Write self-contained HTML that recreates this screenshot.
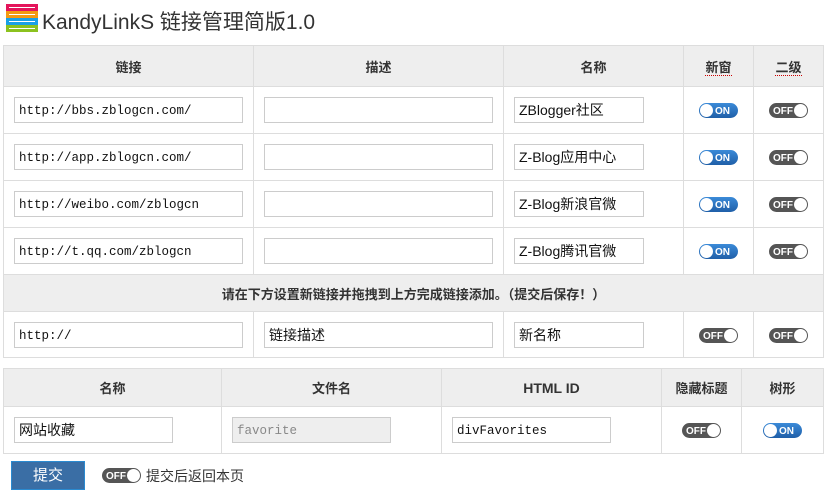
<!DOCTYPE html>
<html><head><meta charset="utf-8"><style>
*{box-sizing:border-box}
body{margin:0;width:826px;height:493px;background:#fff;font-family:"Liberation Sans","Noto Sans CJK SC",sans-serif;color:#222;position:relative;overflow:hidden}
.title{position:absolute;left:42px;top:6px;font-size:21px;color:#333}
.logo{position:absolute;left:6px;top:4px;width:32px}
.logo div{height:7px;position:relative}
.logo div:after{content:"";position:absolute;left:3px;right:3px;top:3px;height:1px;background:#fff}
table{position:absolute;border-collapse:collapse;table-layout:fixed}
td,th{border:1px solid #ddd;padding:0;text-align:center;font-size:13px}
th{background:#eee;font-weight:bold;color:#333}
input{font-family:"Liberation Mono","Noto Sans CJK SC",monospace;font-size:12.5px;border:1px solid #ccc;height:26px;line-height:24px;padding:2px 4px 0;display:block;margin-left:10px;color:#111}
.cn{font-family:"Liberation Sans","Noto Sans CJK SC",sans-serif;font-size:14px;padding-top:0}
.tg{display:inline-block;width:39px;height:15px;border-radius:8px;position:relative;vertical-align:middle;font-size:10px;font-weight:bold;color:#fff}
.tg:after{content:"";position:absolute;top:1px;width:13px;height:13px;border-radius:50%;background:#fff}
.tg span{position:absolute;top:1px;height:15px;line-height:15px;display:block}
.on{background:linear-gradient(#3b8ad8,#1f5fa8)}
.on:after{left:1px}
.on span{left:16px}
.off{background:#555}
.off:after{right:1px}
.off span{left:4px}
.ul{border-bottom:1px dotted #c00}
</style></head><body>
<div class="logo"><div style="background:#e4145b"></div><div style="background:#f39a12"></div><div style="background:#1aa0e6"></div><div style="background:#8cc21f"></div></div>
<div class="title">KandyLinkS 链接管理简版1.0</div>

<table style="left:3px;top:45px;width:820px">
<colgroup><col style="width:250px"><col style="width:250px"><col style="width:180px"><col style="width:70px"><col style="width:70px"></colgroup>
<tr style="height:41px"><th>链接</th><th>描述</th><th>名称</th><th><span class="ul">新窗</span></th><th><span class="ul">二级</span></th></tr>
<tr style="height:47px"><td><input style="width:229px" value="http://bbs.zblogcn.com/"></td><td><input style="width:229px"></td><td><input class="cn" style="width:130px" value="ZBlogger社区"></td><td><span class="tg on"><span>ON</span></span></td><td><span class="tg off"><span>OFF</span></span></td></tr>
<tr style="height:47px"><td><input style="width:229px" value="http://app.zblogcn.com/"></td><td><input style="width:229px"></td><td><input class="cn" style="width:130px" value="Z-Blog应用中心"></td><td><span class="tg on"><span>ON</span></span></td><td><span class="tg off"><span>OFF</span></span></td></tr>
<tr style="height:47px"><td><input style="width:229px" value="http://weibo.com/zblogcn"></td><td><input style="width:229px"></td><td><input class="cn" style="width:130px" value="Z-Blog新浪官微"></td><td><span class="tg on"><span>ON</span></span></td><td><span class="tg off"><span>OFF</span></span></td></tr>
<tr style="height:47px"><td><input style="width:229px" value="http://t.qq.com/zblogcn"></td><td><input style="width:229px"></td><td><input class="cn" style="width:130px" value="Z-Blog腾讯官微"></td><td><span class="tg on"><span>ON</span></span></td><td><span class="tg off"><span>OFF</span></span></td></tr>
<tr style="height:37px"><th colspan="5">请在下方设置新链接并拖拽到上方完成链接添加。（提交后保存！）</th></tr>
<tr style="height:46px"><td><input style="width:229px" value="http://"></td><td><input class="cn" style="width:229px" value="链接描述"></td><td><input class="cn" style="width:130px" value="新名称"></td><td><span class="tg off"><span>OFF</span></span></td><td><span class="tg off"><span>OFF</span></span></td></tr>
</table>

<table style="left:3px;top:368px;width:820px">
<colgroup><col style="width:218px"><col style="width:220px"><col style="width:220px"><col style="width:80px"><col style="width:82px"></colgroup>
<tr style="height:38px"><th>名称</th><th>文件名</th><th style="font-size:14px">HTML ID</th><th>隐藏标题</th><th>树形</th></tr>
<tr style="height:47px"><td><input class="cn" style="width:159px" value="网站收藏"></td><td><input style="width:159px;background:#eee;color:#888" value="favorite"></td><td><input style="width:159px" value="divFavorites"></td><td><span class="tg off"><span>OFF</span></span></td><td><span class="tg on"><span>ON</span></span></td></tr>
</table>

<div style="position:absolute;left:11px;top:461px;width:74px;height:29px;background:#3a6ea5;border:1px solid #2a8ad0;color:#fff;font-size:15px;text-align:center;line-height:27px">提交</div>
<div style="position:absolute;left:102px;top:467px"><span class="tg off"><span>OFF</span></span></div>
<div style="position:absolute;left:146px;top:466px;font-size:14px;color:#333">提交后返回本页</div>
</body></html>
